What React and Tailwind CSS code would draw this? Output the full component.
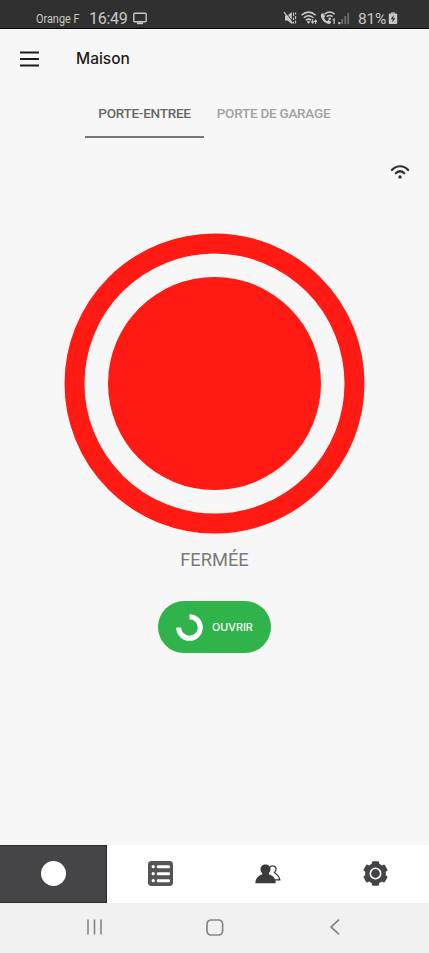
const STROKE = '#c8c8c8'

function CastIcon() {
  return (
    <svg width="14" height="13" viewBox="0 0 14 13" className="ml-[7px]">
      <rect x="0.8" y="1.3" width="12.4" height="8.4" rx="1" fill="none" stroke={STROKE} strokeWidth="1.4" />
      <path d="M4 11.3h6" stroke={STROKE} strokeWidth="1.8" />
    </svg>
  )
}

function StatusIcons() {
  return (
    <svg width="68" height="16" viewBox="283 10 68 16" fill={STROKE}>
      <path d="M285 15.500h2.500l4.300-3.500v12l-4.300-3.500h-2.500z" />
      <path d="M285.300 11.800l7.200 9.500" stroke="#303030" strokeWidth="1" />
      <path d="M284 12.200l8.500 11.200" stroke={STROKE} strokeWidth="1.200" />
      <path d="M293.600 12.500v3.500M293.600 17.500v2.500M293.600 21.500v2M295.600 12.500v2M295.600 16v3M295.600 20.500v3" fill="none" stroke={STROKE} strokeWidth="1.100" />
      <g fill="none" stroke={STROKE} strokeWidth="1.500">
        <path d="M301.500 15.200c4.500-3.900 9.700-3.900 14.200 0" />
        <path d="M303.800 17.800c3-2.600 6.600-2.600 9.600 0" />
        <path d="M306 20.200c1.700-1.400 3.500-1.400 5.200 0" />
      </g>
      <path d="M306.800 21.700q1.800-1.500 3.600 0l-1.800 2.100z" />
      <path d="M312.600 19.300v3.800M311.200 21.500l1.400 1.700 1.400-1.700M315.600 24v-3.800M314.200 21.800l1.400-1.700 1.400 1.700" fill="none" stroke={STROKE} strokeWidth="1.100" />
      <path d="M323.500 13.300c-1.800-.6-3.100 1.200-2.500 3.400 1 3.500 4 6.500 7.600 7.200 1.700.3 3-1.500 2.200-2.700l-2.200-1.200-1.600 1.200c-1.400-.7-2.400-2-2.900-3.400l1-1.400z" />
      <path d="M324.500 14.200c3.200-2.600 7.200-2.600 10.200 0M326.600 16.700c2-1.500 4-1.500 6 0" fill="none" stroke={STROKE} strokeWidth="1.500" />
      <circle cx="329.700" cy="18.700" r="1.300" />
      <path d="M332.600 20l1.500-.9v5" fill="none" stroke={STROKE} strokeWidth="1.200" />
      <rect x="338.300" y="22" width="2" height="2.200" />
      <g fill="#6c6c6c">
        <rect x="341.300" y="19" width="1.800" height="5.200" />
        <rect x="344.300" y="16" width="1.800" height="8.200" />
        <rect x="347.300" y="13" width="1.800" height="11.200" />
      </g>
    </svg>
  )
}

function BatteryIcon() {
  return (
    <svg width="10" height="14" viewBox="0 0 10 14" className="mb-[1px] ml-[2px]">
      <rect x="3" y="1" width="4" height="2" fill="#8a8a8a" />
      <rect x="0.800" y="2.500" width="8.400" height="10.500" rx="1" fill={STROKE} />
      <path d="M5.700 4L2.700 8.200h2L4.300 11.500l3-4.300h-2z" fill="#303030" />
    </svg>
  )
}

function StatusBar() {
  return (
    <div className="flex h-[29px] shrink-0 items-start border-b border-black bg-[#303030] pl-[36px] pt-[10px] text-[#c8c8c8]">
      <div className="flex h-[17px] w-[247px] items-center">
        <span className="w-[53px] origin-left scale-x-[0.87] whitespace-nowrap text-[12.500px] leading-4">Orange F</span>
        <span className="w-[37px] pt-px text-[16px] leading-4 tracking-[-0.300px]">16:49</span>
        <CastIcon />
      </div>
      <StatusIcons />
      <div className="ml-[7px] flex h-[17px] items-center">
        <span className="w-[28px] pt-px text-[15.500px] leading-4 tracking-[-0.200px]">81%</span>
        <BatteryIcon />
      </div>
    </div>
  )
}

function Header() {
  return (
    <header className="flex h-[60px] shrink-0 items-start pl-[20px] pt-[19px]">
      <svg width="19" height="20" viewBox="0 0 19 20" stroke="#1e1e1e" strokeWidth="1.800">
        <path d="M0 4.500h19M0 11h19M0 17.500h19" />
      </svg>
      <h1 className="ml-[37px] pt-px font-['Inter'] text-[15.500px] font-medium leading-5 text-[#1c1c1c]">Maison</h1>
    </header>
  )
}

function DoorTabs() {
  return (
    <nav className="flex h-[49px] shrink-0 pl-[85px] text-[13.500px] font-medium tracking-[-0.250px]">
      <div className="flex w-[119px] items-center justify-center border-b-2 border-[#777777] pt-[2px] text-[#666666]">PORTE-ENTREE</div>
      <div className="flex w-[139px] items-center justify-center border-b-2 border-transparent pt-[2px] text-[#a2a2a2]">PORTE DE GARAGE</div>
    </nav>
  )
}

function DoorWifi() {
  return (
    <div className="flex h-[95.500px] shrink-0 justify-end pr-[19px] pt-[25.500px]">
      <svg width="20" height="16" viewBox="0 0 20 16" fill="none" stroke="#333333" strokeWidth="2.200" strokeLinecap="round">
        <path d="M1.900 6c4.800-5 11.500-5 16.300 0" />
        <path d="M5.800 9.300c2.600-2.500 5.900-2.500 8.500 0" />
        <circle cx="10" cy="13" r="1.700" fill="#333333" stroke="none" />
      </svg>
    </div>
  )
}

function ListIcon() {
  return (
    <svg width="25" height="25" viewBox="0 0 25 25">
      <rect width="25" height="25" rx="3.500" fill="#555557" />
      <g fill="#ffffff">
        <circle cx="5.200" cy="5.700" r="1.600" />
        <circle cx="5.200" cy="12.700" r="1.600" />
        <circle cx="5.200" cy="19.700" r="1.600" />
        <rect x="8.800" y="4.200" width="13.200" height="3" rx="1.200" />
        <rect x="8.800" y="11.200" width="13.200" height="3" rx="1.200" />
        <rect x="8.800" y="18.200" width="13.200" height="3" rx="1.200" />
      </g>
    </svg>
  )
}

function UsersIcon() {
  return (
    <svg width="26" height="20" viewBox="0 0 26 20">
      <path d="M14.500 3.600c1.500-2.400 6.200-2.300 6.600 1.300.1 1.600-.9 2.600-1.700 3.600 1.800 1.700 5 3 5.400 7.300h-5" fill="#fff" stroke="#333335" strokeWidth="1.200" />
      <path d="M10.500.6c3 0 5 2 5 4.700 0 1.700-.7 2.900-1.600 3.900v1.200c3.800.7 6.900 3.600 6.900 8.800H.4c0-5.200 3.300-8.100 6.800-8.800V9.200c-1-1-1.700-2.200-1.700-3.900 0-2.700 2-4.700 5-4.700z" fill="#3b3b3d" />
    </svg>
  )
}

function GearIcon() {
  return (
    <svg width="25" height="25" viewBox="0 0 25 25">
      <g fill="#444446">
        <circle cx="12.500" cy="12.500" r="10.400" />
        <rect x="8.900" y="0.200" width="7.200" height="24.600" rx="1.200" />
        <rect x="8.900" y="0.200" width="7.200" height="24.600" rx="1.200" transform="rotate(60 12.500 12.500)" />
        <rect x="8.900" y="0.200" width="7.200" height="24.600" rx="1.200" transform="rotate(120 12.500 12.500)" />
      </g>
      <circle cx="12.500" cy="12.500" r="5.200" fill="none" stroke="#fff" strokeWidth="1.600" />
    </svg>
  )
}

function BottomTabs() {
  return (
    <nav className="grid h-[58px] shrink-0 grid-cols-4 bg-white">
      <div className="flex items-center justify-center border-b border-r border-t border-[#2b2b2c] bg-[#454547] pb-px">
        <span className="size-[25px] rounded-full bg-white" />
      </div>
      <div className="flex items-center justify-center pb-px"><ListIcon /></div>
      <div className="flex items-center justify-center"><UsersIcon /></div>
      <div className="flex items-center justify-center pb-px"><GearIcon /></div>
    </nav>
  )
}

function SystemNav() {
  return (
    <div className="flex h-[50px] shrink-0 items-center justify-between bg-[#f1f1f1] px-[86px] pb-[2px]">
      <svg width="17" height="16" viewBox="0 0 17 16" stroke="#858585" strokeWidth="1.600"><path d="M2 .5v15M8.500.5v15M15 .5v15" /></svg>
      <svg width="18" height="17" viewBox="0 0 18 17" fill="none" stroke="#858585" strokeWidth="1.700"><rect x="1" y="1" width="15.600" height="15" rx="4" /></svg>
      <svg width="17" height="16" viewBox="0 0 17 16" fill="none" stroke="#858585" strokeWidth="1.700"><path d="M13 .7L5 8l8 7.300" /></svg>
    </div>
  )
}

export default function App() {
  return (
    <div className="flex h-[953px] w-[429px] flex-col overflow-hidden bg-[#f7f7f7] font-['Roboto','Liberation_Sans',sans-serif]">
      <StatusBar />
      <Header />
      <DoorTabs />
      <DoorWifi />
      <main className="flex flex-1 flex-col items-center">
        <svg width="301" height="300" viewBox="0 0 301 300" className="shrink-0 overflow-visible">
          <circle cx="150.500" cy="149.500" r="140" fill="none" stroke="#ff1a14" strokeWidth="20" />
          <circle cx="150.500" cy="149.500" r="106.500" fill="#ff1a14" />
        </svg>
        <p className="mt-[14.500px] text-[18.300px] font-normal leading-6 text-[#7a7a7a]">FERMÉE</p>
        <button className="mt-[29px] flex h-[52px] w-[113px] items-center rounded-[26px] bg-[#2fb34a] pl-[18px] text-white">
          <svg width="27" height="27" viewBox="0 0 27 27" fill="none" stroke="#fff" strokeWidth="5"><path d="M13.500 2.700A10.800 10.800 0 1 1 2.700 13.500" /></svg>
          <span className="ml-[9px] pt-[2px] font-['Inter'] text-[10.800px] font-medium">OUVRIR</span>
        </button>
      </main>
      <BottomTabs />
      <SystemNav />
    </div>
  )
}
